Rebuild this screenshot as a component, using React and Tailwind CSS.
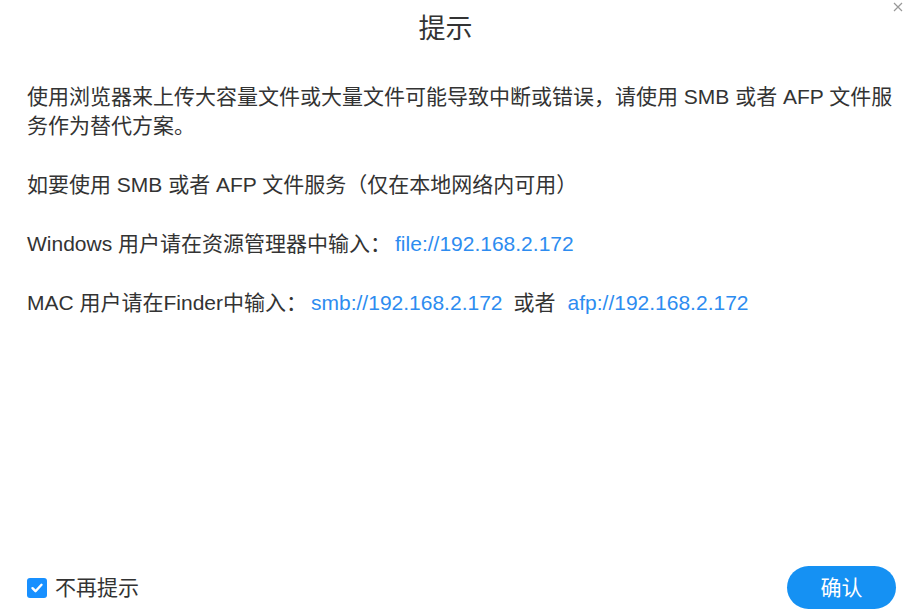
export default function App() {
  const link = "text-[#2d8cf0]";

  return (
    <div className="relative flex h-[615px] w-[919px] flex-col bg-white font-['Liberation_Sans','Noto_Sans_CJK_SC',sans-serif] text-[#333]">
      {/* header */}
      <div className="flex h-[59px] items-center justify-center pr-[28px] text-[27px]">
        提示
      </div>
      <button className="absolute right-[15px] top-[1px] p-[1px] text-[#999]">
        <svg width="10" height="10" viewBox="0 0 10 10" stroke="currentColor" strokeWidth="1.2">
          <path d="M1 1l8 8M9 1l-8 8" />
        </svg>
      </button>

      {/* body */}
      <div className="flex-1 pl-[27px] pr-[17px] pt-[23px] text-[21px] leading-[29px]">
        <p className="mb-[30px]">
          使用浏览器来上传大容量文件或大量文件可能导致中断或错误，请使用 SMB 或者 AFP 文件服务作为替代方案。
        </p>
        <p className="mb-[30px]">如要使用 SMB 或者 AFP 文件服务（仅在本地网络内可用）</p>
        <p className="mb-[30px]">
          Windows 用户请在资源管理器中输入：
          <span className={`${link} ml-[4px]`}>file://192.168.2.172</span>
        </p>
        <p className="mb-[30px]">
          MAC 用户请在Finder中输入：
          <span className={`${link} ml-[4px] mr-[11px]`}>smb://192.168.2.172</span>
          或者
          <span className={`${link} ml-[12px]`}>afp://192.168.2.172</span>
        </p>
      </div>

      {/* footer */}
      <div className="flex items-center justify-between pb-[6px] pl-[27px] pr-[23px]">
        <label className="flex items-center gap-[8px] text-[21px]">
          <span className="flex h-[20px] w-[20px] items-center justify-center rounded-[3px] bg-[#1890ff]">
            <svg width="14" height="14" viewBox="0 0 14 14" fill="none" stroke="white" strokeWidth="2.4" strokeLinecap="round" strokeLinejoin="round">
              <path d="M2.5 7.2l3 3 6-6.4" />
            </svg>
          </span>
          不再提示
        </label>
        <button className="h-[43px] w-[109px] rounded-full bg-[#1591f3] text-[21px] text-white">
          确认
        </button>
      </div>
    </div>
  );
}
